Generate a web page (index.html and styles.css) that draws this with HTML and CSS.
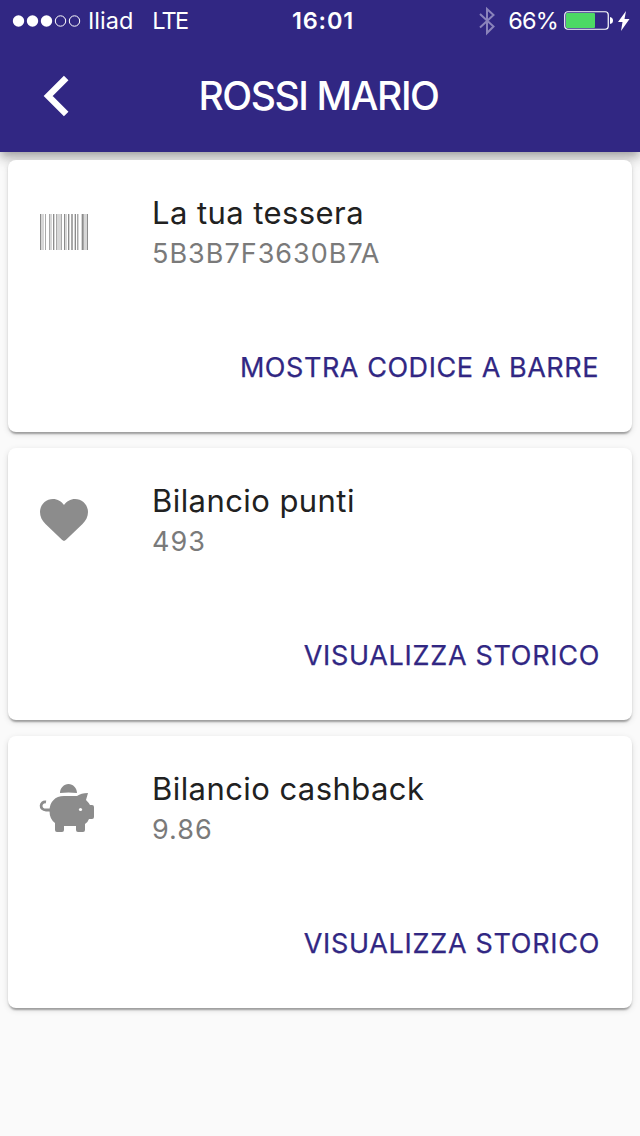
FILE: index.html
```html
<!DOCTYPE html>
<html lang="it">

<head>
    <meta charset="UTF-8" />
    <meta name="viewport" content="width=device-width, initial-scale=1" />
    <title>Rossi Mario</title>
    <link rel="stylesheet" href="styles.css">
</head>

<body>

    <header class="app-bar">
        <div class="status-bar">
            <div class="status-left">
                <svg class="signal" width="68" height="12" viewBox="0 0 68 12">
                    <g fill="#fff">
                        <circle cx="5.5" cy="6" r="5.7" />
                        <circle cx="19.5" cy="6" r="5.7" />
                        <circle cx="33.5" cy="6" r="5.7" />
                    </g>
                    <g fill="none" stroke="#fff">
                        <circle cx="47.5" cy="6" r="5.2" />
                        <circle cx="61.5" cy="6" r="5.2" />
                    </g>
                </svg>
                <span class="carrier">Iliad</span>
                <span class="network">LTE</span>
            </div>
            <span class="clock">16:01</span>
            <div class="status-right">
                <svg class="bluetooth" width="16" height="28" viewBox="0 0 16 28">
                    <path d="M1 7 L14.5 19.5 L8 26 V2 L14.5 8 L1 20.5" fill="none" stroke="#8a83bb" stroke-width="2" />
                </svg>
                <span class="percent">66%</span>
                <svg class="battery" width="50" height="20" viewBox="0 0 50 20">
                    <rect x="0.75" y="0.75" width="43.5" height="17.5" rx="3" fill="none" stroke="#fff" stroke-width="1.2" />
                    <rect x="2" y="2" width="29" height="15" rx="1" fill="#4cd964" />
                    <path d="M46 6 Q49 6.5 49 9.5 T46 13 Z" fill="#fff" />
                </svg>
                <svg class="bolt" width="12" height="20" viewBox="0 0 12 20">
                    <path d="M8 0 L0 11 H4.5 L3 20 L11.5 8 H6.5 Z" fill="#fff" />
                </svg>
            </div>
        </div>
        <div class="toolbar">
            <svg class="back" width="26" height="40" viewBox="0 0 26 40">
                <path d="M23.2 2 L5.2 20 L23.2 38" fill="none" stroke="#fff" stroke-width="6.4" />
            </svg>
            <h1>ROSSI MARIO</h1>
        </div>
    </header>

    <main class="cards">
        <section class="card">
            <div class="tile">
                <svg class="icon" width="56" height="56" viewBox="0 0 56 56">
                    <g fill="#8c8c8c">
                        <path d="M0 10h1v36h-1z M13 10h1v36h-1z M24 10h1v36h-1z M28 10h1v36h-1z M35 10h1v36h-1z M42 10h1v36h-1z M47 10h1v36h-1z" />
                        <path opacity=".75" d="M5 10h1v36h-1z M9 10h1v36h-1z M16 10h1v36h-1z M21 10h1v36h-1z M31 10h2v36h-2z M37 10h1v36h-1z M43 10h1v36h-1z" />
                        <path opacity=".35" d="M1 10h3v36h-3z M10 10h2v36h-2z M14 10h1v36h-1z M17 10h4v36h-4z M25 10h2v36h-2z M29 10h1v36h-1z M34 10h1v36h-1z M38 10h1v36h-1z M41 10h1v36h-1z M44 10h3v36h-3z" />
                    </g>
                </svg>
                <div class="tile-text">
                    <h2>La tua tessera</h2>
                    <p>5B3B7F3630B7A</p>
                </div>
            </div>
            <div class="actions">
                <button class="barcode-btn">MOSTRA CODICE A BARRE</button>
            </div>
        </section>

        <section class="card">
            <div class="tile">
                <svg class="icon" width="56" height="56" viewBox="0 0 56 56">
                    <path fill="#8c8c8c" d="M22.2 48.1 L5.5 32 C2 28.5 0 24.5 0 20 C0 12.5 6 7 13 7 C17.5 7 21.5 9.5 24 13 C26.5 9.5 30.5 7 35 7 C42 7 48 12.5 48 20 C48 24.5 46 28.5 42.5 32 L25.8 48.1 Q24 49.7 22.2 48.1 Z" />
                </svg>
                <div class="tile-text">
                    <h2>Bilancio punti</h2>
                    <p>493</p>
                </div>
            </div>
            <div class="actions">
                <button>VISUALIZZA STORICO</button>
            </div>
        </section>

        <section class="card">
            <div class="tile">
                <svg class="icon" width="56" height="56" viewBox="0 0 56 56">
                    <g fill="#8c8c8c">
                        <path d="M20 13 C20 8 24 4 28.5 4 C33 4 37 8 37 13 Q28.5 12 20 13 Z" />
                        <path d="M24 16 H37 C40 14 43 13 48 13 L46 20 Q49 23 50 25 H52 Q54 25 54 27 V37 Q54 39 52 39 H49 Q48 42 45 44 V50 Q45 52 43 52 H38 Q36 52 36 50 V46 H24 V50 Q24 52 22 52 H17 Q15 52 15 50 V43 Q9.5 39 9.5 31 C9.5 22 15 16 24 16 Z" />
                    </g>
                    <path d="M6 22 C0 21 -1 30 6 30 H11" fill="none" stroke="#8c8c8c" stroke-width="2.8" />
                    <circle cx="40.5" cy="29.5" r="1.6" fill="#fff" />
                </svg>
                <div class="tile-text">
                    <h2>Bilancio cashback</h2>
                    <p>9.86</p>
                </div>
            </div>
            <div class="actions">
                <button>VISUALIZZA STORICO</button>
            </div>
        </section>
    </main>

</body>

</html>
```
FILE: styles.css
```css
* {
    box-sizing: border-box;
}

body {
    margin: 0;
    background: #fafafa;
    font-family: Inter, Roboto, sans-serif;
}

h1,
h2,
p {
    margin: 0;
    white-space: nowrap;
}

svg {
    display: block;
    overflow: visible;
    flex: none;
}

.app-bar {
    height: 152px;
    background: #312783;
    color: #fff;
    box-shadow: 0 4px 8px -2px rgba(0, 0, 0, 0.2),
        0 8px 10px 0 rgba(0, 0, 0, 0.14),
        0 2px 20px 0 rgba(0, 0, 0, 0.12);
}

.status-bar {
    display: grid;
    grid-template-columns: 1fr auto 1fr;
    height: 40px;
    padding: 0 10px 0 13px;
    font-size: 23.5px;
    line-height: 41px;
}

.status-left,
.status-right {
    display: flex;
    align-items: center;
}

.status-right {
    justify-content: flex-end;
}

.bluetooth {
    margin-right: 13px;
}

.carrier {
    margin-left: 7px;
}

.network {
    margin-left: 19px;
    letter-spacing: -1.8px;
}

.clock {
    padding-left: 3px;
    font-weight: 600;
    letter-spacing: 0.8px;
}

.percent {
    margin-right: 6px;
    letter-spacing: -0.8px;
}

.bolt {
    margin-left: 4px;
}

.toolbar {
    display: grid;
    grid-template-columns: 112px 1fr 112px;
    align-items: center;
    height: 112px;
}

.back {
    margin-left: 43px;
}

h1 {
    padding-right: 3px;
    font-size: 39px;
    font-weight: 500;
    line-height: 46px;
    text-align: center;
    letter-spacing: -1.4px;
}

.cards {
    position: relative;
    display: grid;
    gap: 16px;
    padding: 8px;
}

.card {
    height: 272px;
    padding: 32px;
    border-radius: 8px;
    background: #fff;
    box-shadow: 0 4px 2px -2px rgba(0, 0, 0, 0.2),
        0 2px 2px 0 rgba(0, 0, 0, 0.14),
        0 2px 6px 0 rgba(0, 0, 0, 0.12);
}

.tile {
    display: flex;
    height: 144px;
}

.icon {
    margin: 12px 56px 0 0;
}

h2 {
    font-size: 31px;
    font-weight: 400;
    line-height: 42px;
    color: #212121;
    letter-spacing: 0.43px;
}

.tile p {
    font-size: 27px;
    line-height: 40px;
    color: #7a7a7a;
    letter-spacing: 1px;
}

.actions {
    display: flex;
    justify-content: flex-end;
}

button {
    padding: 0;
    border: none;
    background: none;
    font: 400 27px/64px Inter, Roboto, sans-serif;
    letter-spacing: 0.7px;
    color: #312783;
    white-space: nowrap;
    -webkit-text-stroke: 0.25px #312783;
}

.barcode-btn {
    padding-right: 1px;
    letter-spacing: 0.55px;
}
```
